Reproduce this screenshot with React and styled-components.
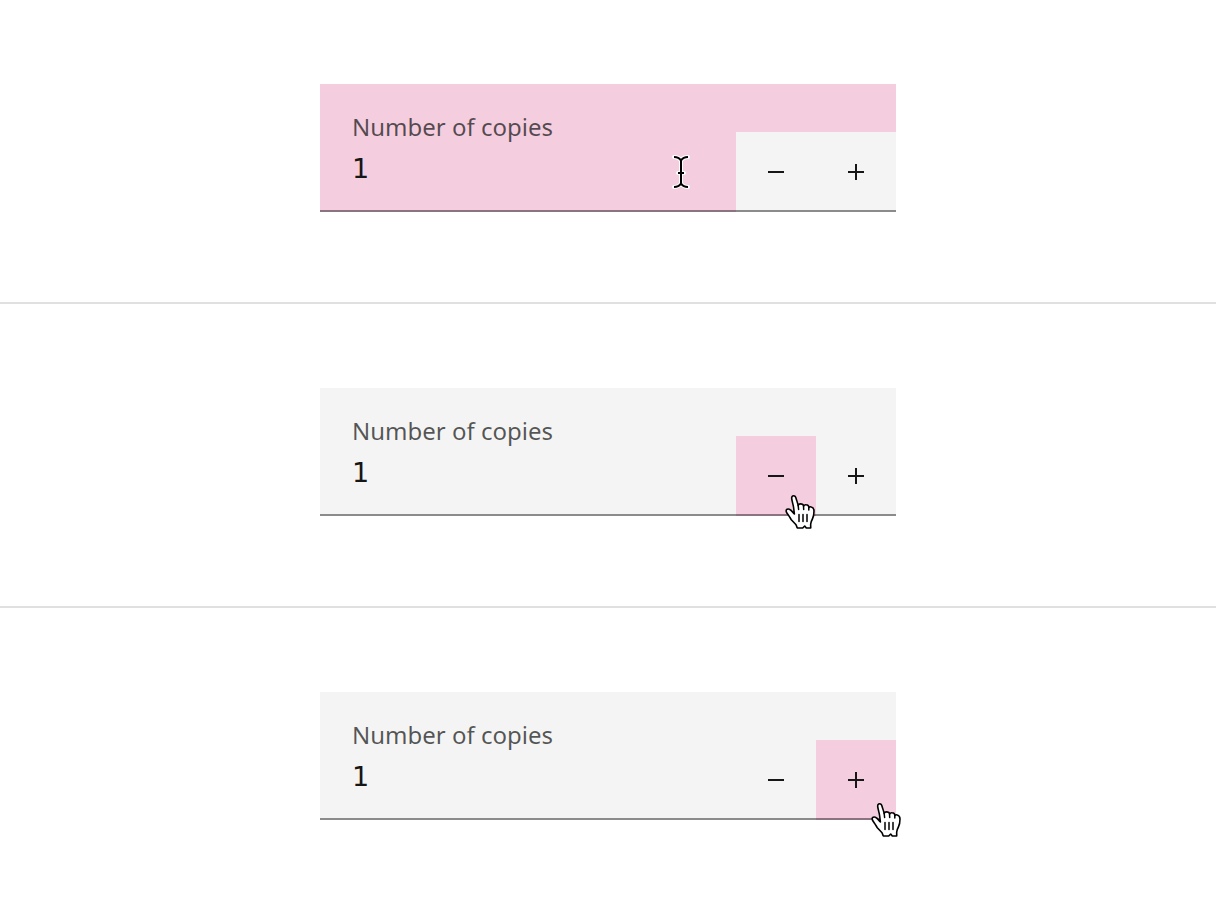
import React, { useId, useState } from "react";
import styled, { createGlobalStyle, css } from "styled-components";

const GlobalStyle = createGlobalStyle`
  *, *::before, *::after { box-sizing: border-box; }
  body {
    margin: 0;
    background: #ffffff;
    color: #161616;
    font-family: "Noto Sans", sans-serif;
  }
`;

const PINK = "#f4cddf";
const GRAY = "#f4f4f4";

const Page = styled.main`
  display: flex;
  flex-direction: column;
`;

const Panel = styled.section`
  display: flex;
  justify-content: center;
  padding: 84px 32px 90px;

  & + & {
    border-top: 2px solid #e0e0e0;
  }
`;

const Field = styled.div`
  position: relative;
  display: flex;
  align-items: flex-end;
  width: 100%;
  max-width: 576px;
  background: ${(p) => (p.$active ? PINK : GRAY)};

  &::after {
    content: "";
    position: absolute;
    inset: auto 0 0;
    height: 2px;
    background: rgba(0, 0, 0, 0.43);
    pointer-events: none;
  }
`;

const Entry = styled.div`
  position: relative;
  flex: 1;
  min-width: 0;
  display: flex;
  flex-direction: column;
  padding: 28px 32px 18px;
`;

const Label = styled.label`
  font-size: 24px;
  line-height: 30px;
  color: rgba(22, 22, 22, 0.72);
`;

const Value = styled.input`
  width: 100%;
  height: 52px;
  padding: 0;
  border: 0;
  outline: 0;
  background: transparent;
  color: #161616;
  font-family: "DejaVu Sans", sans-serif;
  font-size: 27px;
`;

const Stepper = styled.div`
  display: flex;
`;

const StepButton = styled.button`
  position: relative;
  display: flex;
  align-items: center;
  justify-content: center;
  width: 80px;
  height: 80px;
  padding: 0;
  border: 0;
  color: #161616;
  background: ${(p) => (p.$active ? PINK : GRAY)};
`;

const Pointer = styled.svg`
  position: absolute;
  z-index: 1;
  overflow: visible;
  pointer-events: none;
  ${(p) =>
    p.$over === "entry" &&
    css`
      right: 44px;
      bottom: 22px;
    `}
  ${(p) =>
    p.$over === "decrement" &&
    css`
      left: 48px;
      top: 57px;
    `}
  ${(p) =>
    p.$over === "increment" &&
    css`
      left: 54px;
      top: 61px;
    `}
`;

function StepIcon({ plus }) {
  return (
    <svg width="16" height="16" viewBox="0 0 16 16" fill="currentColor" aria-hidden="true">
      <rect y="7" width="16" height="2" />
      {plus && <rect x="7" width="2" height="16" />}
    </svg>
  );
}

function TextPointer() {
  const beam =
    "M3 3C7 3 8.5 4 10 6.5C11.5 4 13 3 17 3M3 33C7 33 8.5 32 10 29.5C11.5 32 13 33 17 33M10 6V30M7 19H13";
  return (
    <Pointer $over="entry" width="22" height="36" viewBox="0 0 20 36" fill="none" aria-hidden="true">
      <path d={beam} stroke="#ffffff" strokeWidth="4" strokeLinecap="round" />
      <path d={beam} stroke="#000000" strokeWidth="2" />
    </Pointer>
  );
}

function HandPointer({ over }) {
  return (
    <Pointer $over={over} width="32" height="36" viewBox="0 0 32 36" fill="none" aria-hidden="true">
      <path
        d="M10.4 21L9.6 14.5C9.2 11.5 7.9 8 7.7 5.4C7.6 3.7 8.3 2.8 9.6 2.8C11 2.8 11.7 3.8 12.2 5.7C13 8.5 13.7 10.3 14.2 12.7C14.4 11.4 15.2 10.9 16.4 10.9C18.4 10.9 19.4 11.7 19.6 13C20.2 12 21.1 11.6 22.2 11.8C23.9 12 24.8 12.9 24.9 14.5C25.5 13.8 26.3 13.6 27.3 13.9C29.2 14.4 30 15.6 30 18C30 21 29.8 23.4 28.4 26C27.4 27.9 26.8 29.5 26.7 31C26.6 32.7 26.8 34 26.7 35H22.3L20.7 33L18.7 35H13.3C12.6 33.5 12.7 32.7 11.8 31.5L7.3 26.7C6.2 25 5.7 23.9 4.3 22C3.1 20.4 2 18.9 2.1 17.8C2.3 16.4 3.6 15.7 5.3 16.2C7.3 16.8 8.8 19.4 10.4 21Z"
        fill="#ffffff"
        stroke="#000000"
        strokeWidth="1.6"
        strokeLinejoin="round"
      />
      <path
        d="M14.2 12.5L14.6 16.5M19.5 13L19.7 16.5M24.8 14.5V17M15 21.5V28.5M19 21.5V28.5M23 21.5V28.5"
        stroke="#000000"
        strokeWidth="1.5"
        strokeLinecap="round"
      />
    </Pointer>
  );
}

function NumberInput({ target }) {
  const id = useId();
  const [count, setCount] = useState("1");
  const step = (by) => setCount((c) => String((Number(c) || 0) + by));

  return (
    <Field $active={target === "entry"}>
      <Entry>
        <Label htmlFor={id}>Number of copies</Label>
        <Value
          id={id}
          type="text"
          inputMode="numeric"
          value={count}
          onChange={(e) => setCount(e.target.value)}
        />
        {target === "entry" && <TextPointer />}
      </Entry>
      <Stepper>
        <StepButton
          type="button"
          aria-label="Decrease number of copies"
          $active={target === "decrement"}
          onClick={() => step(-1)}
        >
          <StepIcon />
          {target === "decrement" && <HandPointer over="decrement" />}
        </StepButton>
        <StepButton
          type="button"
          aria-label="Increase number of copies"
          $active={target === "increment"}
          onClick={() => step(1)}
        >
          <StepIcon plus />
          {target === "increment" && <HandPointer over="increment" />}
        </StepButton>
      </Stepper>
    </Field>
  );
}

export default function App() {
  return (
    <>
      <GlobalStyle />
      <Page>
        {["entry", "decrement", "increment"].map((target) => (
          <Panel key={target}>
            <NumberInput target={target} />
          </Panel>
        ))}
      </Page>
    </>
  );
}
